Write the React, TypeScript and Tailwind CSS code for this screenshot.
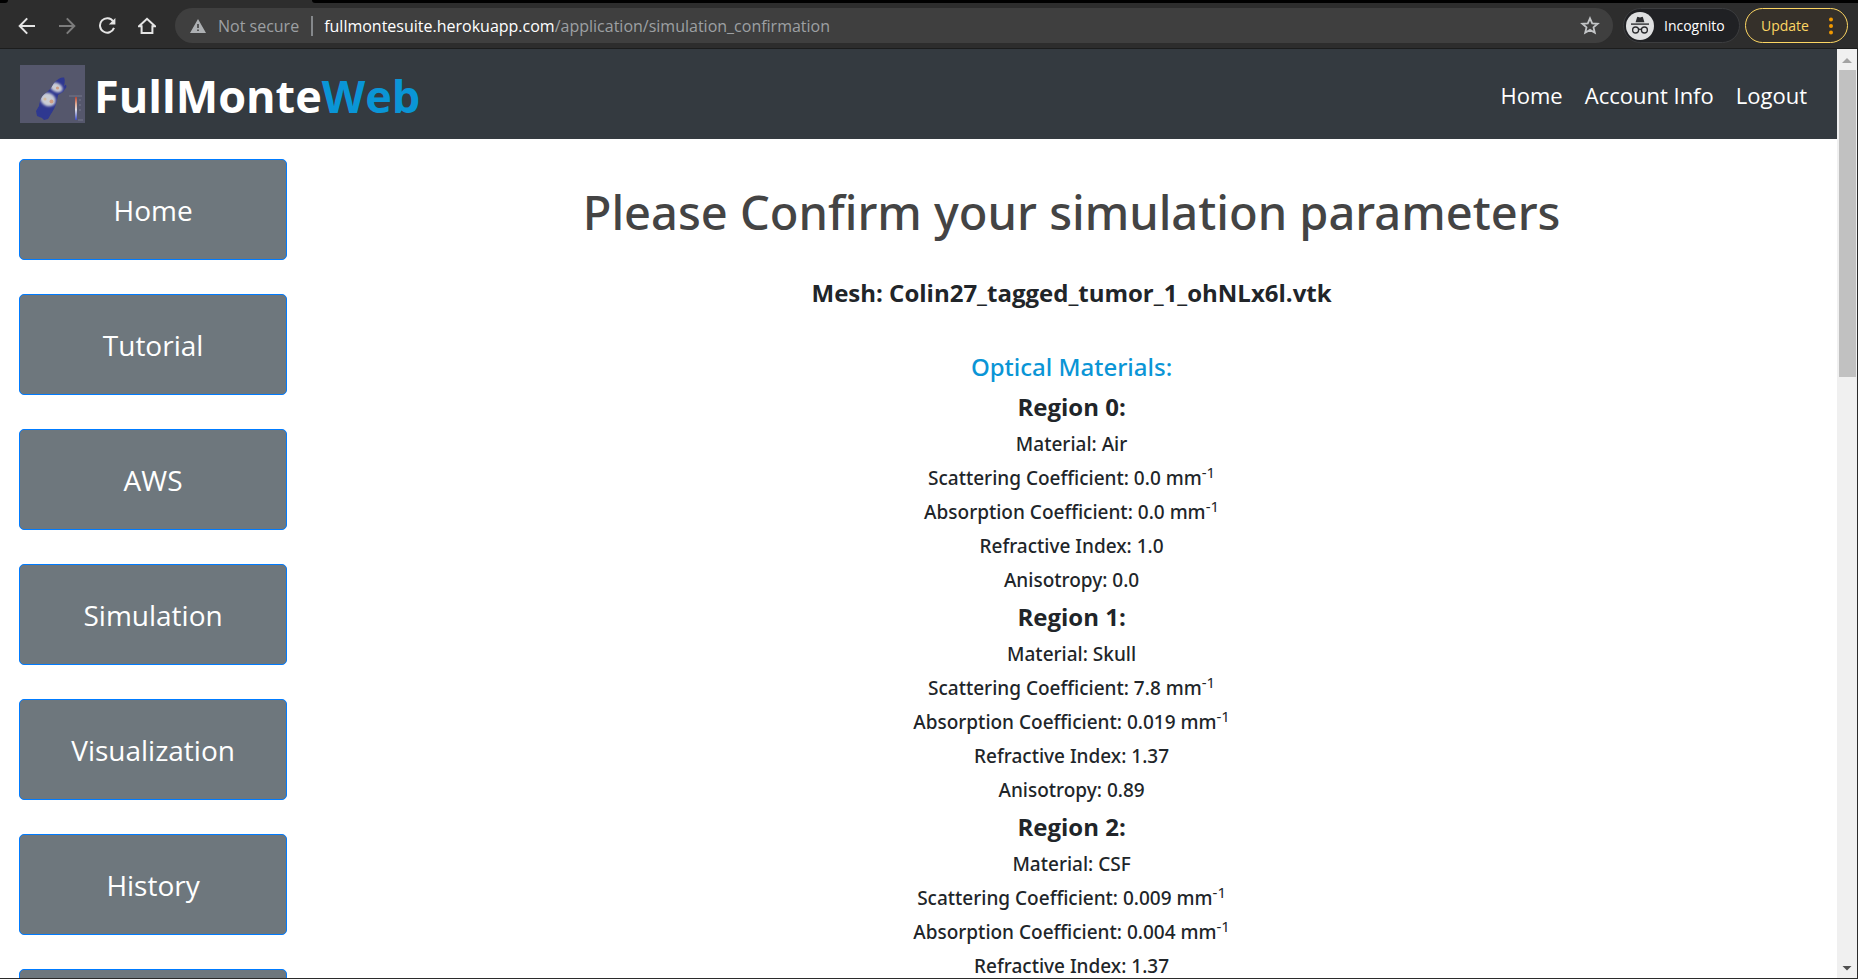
import React from "react";

const sidebarLinks = ["Home", "Tutorial", "AWS", "Simulation", "Visualization", "History", ""];

const regions = [
  { material: "Air", scattering: "0.0", absorption: "0.0", refractive: "1.0", anisotropy: "0.0" },
  { material: "Skull", scattering: "7.8", absorption: "0.019", refractive: "1.37", anisotropy: "0.89" },
  { material: "CSF", scattering: "0.009", absorption: "0.004", refractive: "1.37", anisotropy: null },
];

const iconButton = "flex size-10 items-center justify-center";

function BrowserBar() {
  return (
    <div className="shrink-0 border-b border-[#1c1d1d] bg-[#2d2d2d]">
      <div className="flex h-[3px] bg-[#2d2d2d]">
        <div className="w-2 rounded-br-full bg-black" />
        <div className="w-[304px]" />
        <div className="flex-1 rounded-bl-[6px] bg-black" />
      </div>
      <div className="flex h-[45px] items-center pl-[7px] pr-[10px]">
        <button aria-label="Back" className={iconButton}>
          <svg width="18" height="18" viewBox="0 0 18 18" fill="none" stroke="#e4e4e4" strokeWidth="2">
            <path d="M17 9H2M9.2 1.4 1.7 9l7.5 7.6" />
          </svg>
        </button>
        <button aria-label="Forward" className={iconButton}>
          <svg width="18" height="18" viewBox="0 0 18 18" fill="none" stroke="#7c7c7c" strokeWidth="2">
            <path d="M1 9h15M8.8 1.4 16.3 9l-7.5 7.6" />
          </svg>
        </button>
        <button aria-label="Reload" className={iconButton}>
          <svg width="18" height="18" viewBox="0 0 18 18" fill="none" stroke="#e4e4e4" strokeWidth="2">
            <path d="M15.2 4.400A7.2 7.2 0 1 0 16 10.8" />
            <path d="M17.4 1v6.6h-6.6z" fill="#e4e4e4" stroke="none" />
          </svg>
        </button>
        <button aria-label="Home page" className={iconButton}>
          <svg width="18" height="18" viewBox="0 0 18 18" fill="none" stroke="#e4e4e4" strokeWidth="2">
            <path d="M1 9.3h2.6V16h10.8V9.3H17L9 1.8z" strokeLinejoin="miter" />
          </svg>
        </button>
        <div className="ml-2 flex h-[35px] flex-1 items-center rounded-full bg-[#3f3f3f] pl-[15px] pr-[13px]">
          <svg width="16" height="14" viewBox="0 0 16 14" fill="#adb0b3" className="shrink-0">
            <path fillRule="evenodd" d="M8 0 16 14H0zM7.2 5v4h1.6V5zM7.2 10.4V12h1.6v-1.6z" />
          </svg>
          <span className="ml-[12px] text-[16px] text-[#9da0a3]">Not secure</span>
          <span className="ml-[12px] h-5 w-[2px] bg-[#85888b]" />
          <span className="ml-[11px] flex-1 whitespace-nowrap text-[16px] text-[#9da0a3]">
            <span className="text-white">fullmontesuite.herokuapp.com</span>/application/simulation_confirmation
          </span>
          <button aria-label="Bookmark this page">
            <svg width="20" height="19" viewBox="0 0 20 19" fill="none" stroke="#c3c5c7" strokeWidth="1.8">
              <path d="m10 2.3 2.2 5 5.5.5-4.2 3.6 1.3 5.3L10 13.900l-4.8 2.8 1.3-5.3-4.2-3.6 5.5-.5z" />
            </svg>
          </button>
        </div>
        <div className="ml-[10px] flex h-[35px] w-[117px] items-center rounded-full border border-[#3c3d3f] bg-[#202124] pl-[2px]">
          <svg width="28" height="28" viewBox="0 0 28 28" className="shrink-0">
            <circle cx="14" cy="14" r="14" fill="#dfe0e1" />
            <path d="M9.6 10.2 11 5.4q.3-.8 1.2-.5l1.8.5 1.8-.5q.9-.3 1.2.5l1.4 4.8z" fill="#2b2c2f" />
            <path d="M5 11.4h18v1.4H5z" fill="#2b2c2f" />
            <g fill="none" stroke="#2b2c2f" strokeWidth="1.3">
              <circle cx="9.6" cy="18" r="3" />
              <circle cx="18.4" cy="18" r="3" />
              <path d="M12.6 17.6q1.4-1 2.8 0" />
            </g>
          </svg>
          <span className="ml-[10px] text-[14px] text-white">Incognito</span>
        </div>
        <button className="ml-[5px] flex h-[35px] w-[103px] items-center justify-between rounded-full border border-[#fdd663] bg-[#35302a] pl-[15px] pr-[14px] text-[14px] text-[#fdd663]">
          Update
          <svg width="4" height="18" viewBox="0 0 4 18" fill="#f29900">
            <circle cx="2" cy="2.5" r="2" />
            <circle cx="2" cy="9" r="2" />
            <circle cx="2" cy="15.5" r="2" />
          </svg>
        </button>
      </div>
    </div>
  );
}

function Logo() {
  return (
    <svg width="65" height="58" viewBox="0 0 65 58" aria-hidden="true">
      <defs>
        <filter id="soft" x="-20%" y="-20%" width="140%" height="140%">
          <feGaussianBlur stdDeviation="0.7" />
        </filter>
        <filter id="glow" x="-50%" y="-50%" width="200%" height="200%">
          <feGaussianBlur stdDeviation="1.1" />
        </filter>
        <linearGradient id="scale" x1="0" y1="0" x2="0" y2="1">
          <stop offset="0" stopColor="#b8432f" />
          <stop offset="0.3" stopColor="#e0a890" />
          <stop offset="0.55" stopColor="#dddde4" />
          <stop offset="1" stopColor="#3c4cc0" />
        </linearGradient>
        <clipPath id="body">
          <path d="M34 18C37 14 41 12 44 12.500C45 14 45 17 44 21L46 19.500L46.500 22L43 27L38 30C37 36 36 40 34 44L31 49L28 54L24 55L22 53L17 51L16 46L19 41C20 35 21 31 27 27L31 23Z" />
        </clipPath>
      </defs>
      <rect width="65" height="58" fill="#55576c" />
      <g filter="url(#soft)">
        <path
          d="M34 18C37 14 41 12 44 12.500C45 14 45 17 44 21L46 19.500L46.500 22L43 27L38 30C37 36 36 40 34 44L31 49L28 54L24 55L22 53L17 51L16 46L19 41C20 35 21 31 27 27L31 23Z"
          fill="#2f3790"
        />
        <g clipPath="url(#body)" filter="url(#glow)">
          <ellipse cx="36.500" cy="22.500" rx="6.500" ry="4.500" fill="#c9ccd4" transform="rotate(25 36.500 22.500)" />
          <ellipse cx="28" cy="34.500" rx="8" ry="6.500" fill="#c9ccd4" transform="rotate(25 28 34.500)" />
        </g>
        <circle cx="37.500" cy="23" r="1.6" fill="#cf9d83" />
        <circle cx="25" cy="34" r="1.6" fill="#d3b99f" />
        <circle cx="31.500" cy="36.500" r="2" fill="#cf9d83" />
      </g>
      <path d="M49 31h13M59 35h2M59 40h2M59 45h2M58 55h5" stroke="#77798b" strokeWidth="1" />
      <rect x="55" y="32" width="2" height="23" fill="url(#scale)" />
    </svg>
  );
}

function SiteHeader() {
  return (
    <header className="flex h-[90px] items-center justify-between bg-[#343a40] pl-5 pr-[30px]">
      <a href="#home" className="flex items-center gap-[9px] text-[45px] font-bold leading-none text-white">
        <Logo />
        <span className="pt-[2px]">
          FullMonte<span className="text-[#0a95d6]">Web</span>
        </span>
      </a>
      <nav className="flex gap-[22px] pt-[2px] text-[22px] text-white">
        <a href="#home">Home</a>
        <a href="#account">Account Info</a>
        <a href="#logout">Logout</a>
      </nav>
    </header>
  );
}

function PerMillimetre() {
  return (
    <>
      {" "}
      mm<sup className="text-[15px] font-normal">-1</sup>
    </>
  );
}

function Scrollbar() {
  return (
    <div className="flex w-5 shrink-0 flex-col items-center bg-[#f0f0f0]" aria-hidden="true">
      <svg width="20" height="21" viewBox="0 0 20 21">
        <path d="M10 9 15 14H5z" fill="#a3a3a3" />
      </svg>
      <div className="h-[33%] w-[17px] bg-[#c1c1c1]" />
      <svg width="20" height="20" viewBox="0 0 20 20" className="mt-auto">
        <path d="M10 12.500 14.500 8h-9z" fill="#505050" />
      </svg>
    </div>
  );
}

export default function App() {
  return (
    <div className="flex h-screen flex-col overflow-hidden font-['Open_Sans',sans-serif]">
      <BrowserBar />
      <div className="flex min-h-0 flex-1 border-b border-r border-[#2b2b2b] bg-white">
        <div className="min-w-0 flex-1 overflow-hidden">
          <SiteHeader />
          <div className="grid grid-cols-12">
            <aside className="col-span-2 flex flex-col gap-[34px] px-[19px] pt-5">
              {sidebarLinks.map((label, index) => (
                <button
                  key={index}
                  aria-label={label || "More"}
                  className="h-[101px] shrink-0 rounded-[5px] border border-[#007bff] bg-[#6e777d] text-[28px] text-white"
                >
                  {label}
                </button>
              ))}
            </aside>
            <main className="col-span-10 pt-[43px] text-center font-['Noto_Sans',sans-serif] text-[#212529]">
              <h1 className="text-[47px] font-medium leading-[60px] text-[#444444]">
                Please Confirm your simulation parameters
              </h1>
              <h2 className="mt-[36px] font-['Open_Sans',sans-serif] text-[24px] font-bold leading-[30px]">
                Mesh: Colin27_tagged_tumor_1_ohNLx6l.vtk
              </h2>
              <h2 className="mb-[5px] mt-[44px] text-[24px] font-medium leading-[30px] text-[#0a95d6]">
                Optical Materials:
              </h2>
              {regions.map((region, index) => (
                <section key={region.material} className="text-[19px] font-medium leading-[34px]">
                  <h3 className="font-['Open_Sans',sans-serif] text-[24px] font-bold leading-[40px]">
                    Region {index}:
                  </h3>
                  <p>Material: {region.material}</p>
                  <p>
                    Scattering Coefficient: {region.scattering}
                    <PerMillimetre />
                  </p>
                  <p>
                    Absorption Coefficient: {region.absorption}
                    <PerMillimetre />
                  </p>
                  <p>Refractive Index: {region.refractive}</p>
                  {region.anisotropy && <p>Anisotropy: {region.anisotropy}</p>}
                </section>
              ))}
            </main>
          </div>
        </div>
        <Scrollbar />
      </div>
    </div>
  );
}
